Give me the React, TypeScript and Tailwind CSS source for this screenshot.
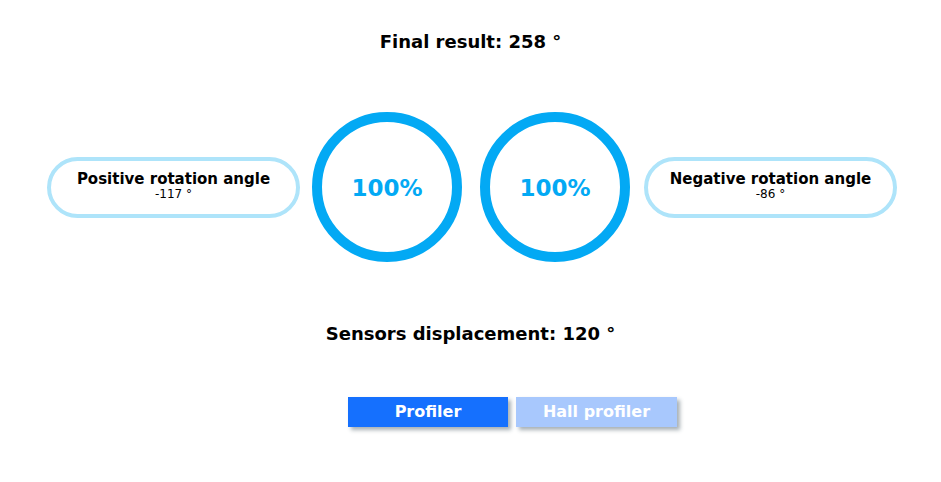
import React from "react";

const FONT = "font-['DejaVu_Sans',Verdana,sans-serif]";

function Ring({ value }: { value: number }) {
  return (
    <div className="flex h-[150px] w-[150px] items-center justify-center rounded-full border-[10px] border-[#03a9f4]">
      <span className="pt-[2px] text-[23px] font-bold text-[#03a9f4]">{value}%</span>
    </div>
  );
}

function AnglePill({ title, value }: { title: string; value: string }) {
  return (
    <div className="flex h-[61px] w-[253px] flex-col items-center justify-center rounded-full border-[4px] border-[#aee4fa] bg-white pb-[4px]">
      <div className="text-[15px] font-bold leading-[18px] text-black">{title}</div>
      <div className="text-[12px] leading-[13px] text-black">{value}</div>
    </div>
  );
}

export default function App() {
  return (
    <div className={`${FONT} h-[482px] w-[941px] bg-white`}>
      <div className="pt-[31px] text-center text-[18px] font-bold leading-[22px] text-black">
        Final result: 258 °
      </div>

      <div className="mt-[59px] flex items-center pl-[47px]">
        <AnglePill title="Positive rotation angle" value="-117 °" />
        <div className="ml-[12px]">
          <Ring value={100} />
        </div>
        <div className="ml-[18px]">
          <Ring value={100} />
        </div>
        <div className="ml-[14px]">
          <AnglePill title="Negative rotation angle" value="-86 °" />
        </div>
      </div>

      <div className="mt-[61px] text-center text-[18px] font-bold leading-[22px] text-black">
        Sensors displacement: 120 °
      </div>

      <div className="mt-[52px] flex gap-[8px] pl-[348px]">
        <button className="h-[30px] w-[160px] bg-[#1570fe] text-[16px] font-bold text-white shadow-[3px_3px_4px_rgba(60,80,90,0.45)]">
          Profiler
        </button>
        <button className="h-[30px] w-[161px] bg-[#a8c8fd] text-[16px] font-bold text-white shadow-[3px_3px_4px_rgba(60,80,90,0.45)]">
          Hall profiler
        </button>
      </div>
    </div>
  );
}
